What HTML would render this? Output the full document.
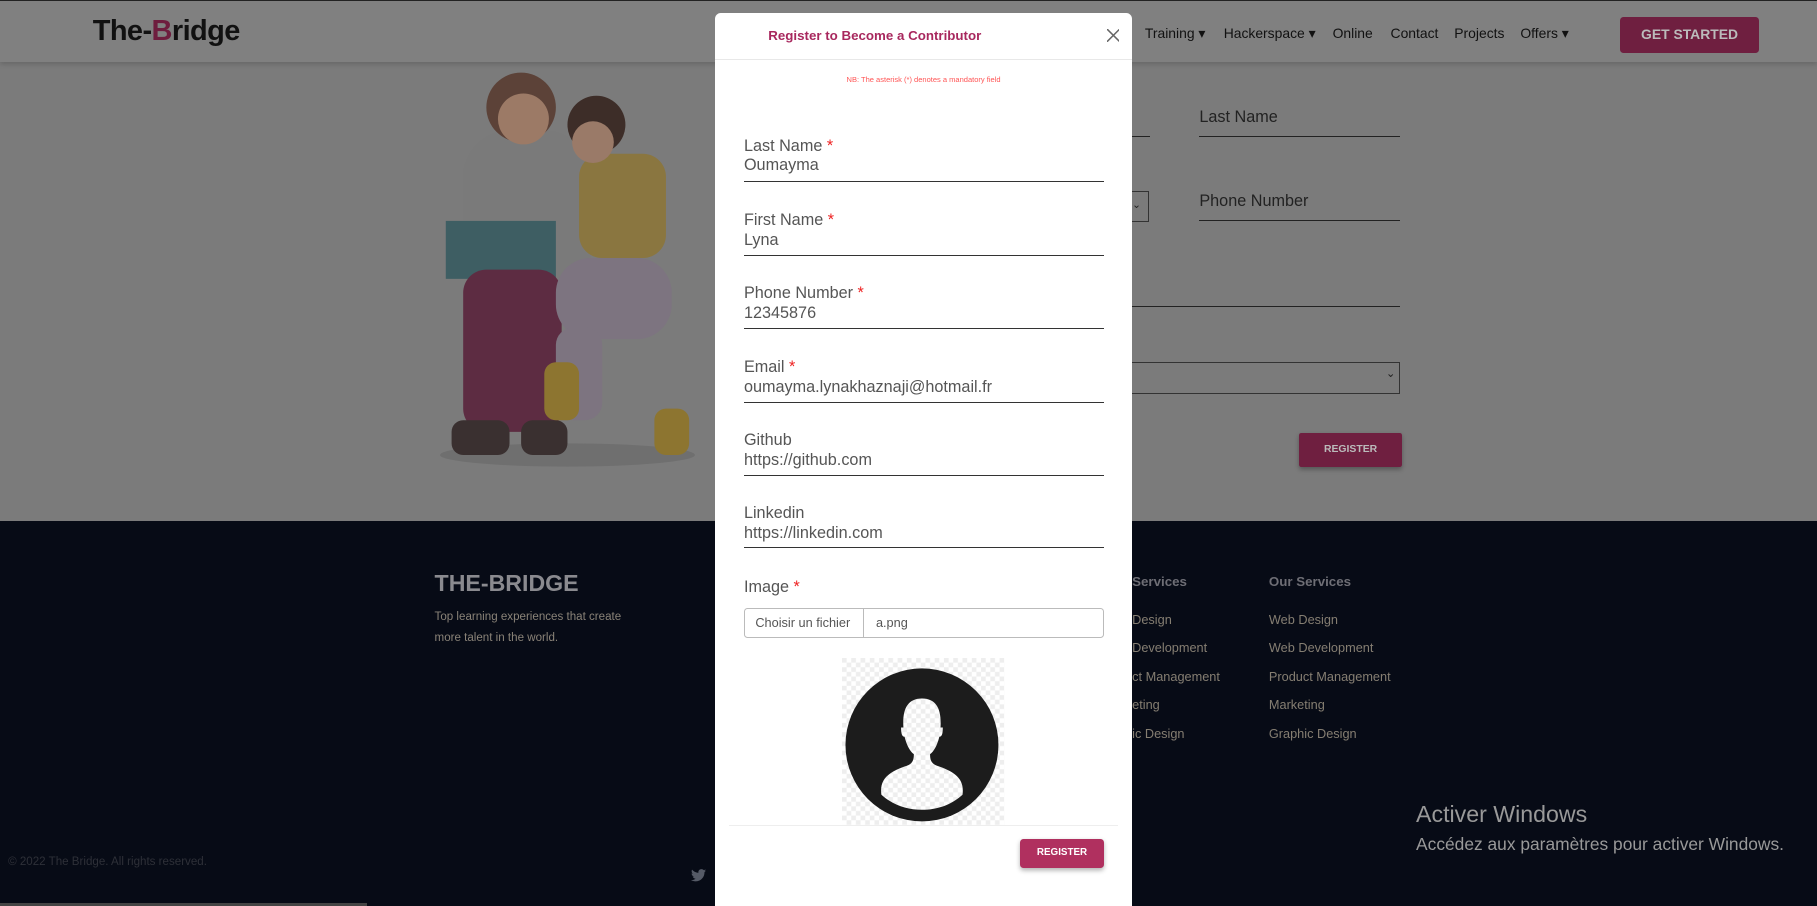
<!DOCTYPE html>
<html><head><meta charset="utf-8"><style>
html,body{margin:0;padding:0;width:1817px;height:906px;overflow:hidden;background:#7b7b7b}
#w{zoom:1.15880;position:relative;width:1568px;height:782px;overflow:hidden;font-family:"Liberation Sans",sans-serif}
.a{position:absolute;white-space:nowrap}
</style></head><body><div id="w">
<!-- nav -->
<div class="a" style="left:0;top:0;width:1568px;height:53px;background:#808080;border-top:1px solid #222;box-shadow:0 2px 4px rgba(0,0,0,.15)"></div>
<div class="a" style="left:80px;top:13px;font-size:25px;font-weight:bold;color:#111;letter-spacing:-0.5px">The-<span style="color:#6e1d3e">B</span>ridge</div>
<div class="a" style="left:988px;top:22px;font-size:12px;color:#111">Training ▾</div>
<div class="a" style="left:1056px;top:22px;font-size:12px;color:#111">Hackerspace ▾</div>
<div class="a" style="left:1150px;top:22px;font-size:12px;color:#111">Online</div>
<div class="a" style="left:1200px;top:22px;font-size:12px;color:#111">Contact</div>
<div class="a" style="left:1255px;top:22px;font-size:12px;color:#111">Projects</div>
<div class="a" style="left:1312px;top:22px;font-size:12px;color:#111">Offers ▾</div>
<div class="a" style="left:1398px;top:15px;width:120px;height:31px;background:#6f1f40;border-radius:3px;color:#bbb;font-size:12px;font-weight:bold;text-align:center;line-height:31px">GET STARTED</div>
<!-- illustration -->
<svg class="a" style="left:380px;top:53px" width="240" height="350">
<ellipse cx="110" cy="340" rx="110" ry="10" fill="#6f6f6f"/>
<rect x="20" y="60" width="110" height="150" rx="40" fill="#7a7a7a"/>
<circle cx="70" cy="40" r="30" fill="#5c4238"/><circle cx="72" cy="50" r="22" fill="#9c7a66"/>
<rect x="120" y="80" width="75" height="90" rx="20" fill="#8a7640"/>
<circle cx="135" cy="55" r="25" fill="#3d2d28"/><circle cx="132" cy="70" r="18" fill="#9a7a68"/>
<rect x="5" y="138" width="95" height="50" fill="#3e5e63"/>
<rect x="20" y="180" width="85" height="140" rx="20" fill="#5d2c42"/>
<rect x="100" y="170" width="100" height="70" rx="30" fill="#7d7480"/>
<rect x="100" y="230" width="40" height="80" rx="15" fill="#7d7480"/>
<rect x="10" y="310" width="50" height="30" rx="10" fill="#3a3030"/><rect x="70" y="310" width="40" height="30" rx="10" fill="#3a3030"/>
<rect x="90" y="260" width="30" height="50" rx="10" fill="#8d7530"/><rect x="185" y="300" width="30" height="40" rx="10" fill="#8d7530"/>
</svg>
<!-- bg form -->
<div class="a" style="left:977px;top:117px;width:15px;height:1px;background:#222"></div>
<div class="a" style="left:1035px;top:93px;font-size:14px;color:#222">Last Name</div>
<div class="a" style="left:1035px;top:117px;width:173px;height:1px;background:#222"></div>
<div class="a" style="left:977px;top:165px;width:14px;height:25px;border:1px solid #333;border-left:none;font-size:9px;color:#222;line-height:25px">⌄</div>
<div class="a" style="left:1035px;top:166px;font-size:14px;color:#222">Phone Number</div>
<div class="a" style="left:1035px;top:190px;width:173px;height:1px;background:#222"></div>
<div class="a" style="left:977px;top:264px;width:231px;height:1px;background:#222"></div>
<div class="a" style="left:977px;top:312px;width:230px;height:26px;border:1px solid #333;border-left:none"></div>
<div class="a" style="left:1196px;top:316px;font-size:10px;color:#222">⌄</div>
<div class="a" style="left:1121px;top:374px;width:89px;height:29px;background:#6f1f40;border-radius:2px;color:#bbb;font-size:9px;font-weight:bold;text-align:center;line-height:29px;box-shadow:0 2px 4px rgba(0,0,0,.3)">REGISTER</div>
<!-- footer -->
<div class="a" style="left:0;top:450px;width:1568px;height:332px;background:#070b16"></div>
<div class="a" style="left:375px;top:492px;font-size:20px;font-weight:bold;color:#8a8a8f">THE-BRIDGE</div>
<div class="a" style="left:375px;top:524px;font-size:10px;line-height:18px;color:#8a8378">Top learning experiences that create<br>more talent in the world.</div>
<div class="a" style="left:977px;top:495px;font-size:11.5px;font-weight:bold;color:#6e6e75">Services</div>
<div class="a" style="left:1095px;top:495px;font-size:11.5px;font-weight:bold;color:#6e6e75">Our Services</div>
<div class="a" style="left:977px;top:523px;font-size:11px;line-height:24.5px;color:#857e72">Design<br>Development<br>ct Management<br>eting<br>ic Design</div>
<div class="a" style="left:1095px;top:523px;font-size:11px;line-height:24.5px;color:#857e72">Web Design<br>Web Development<br>Product Management<br>Marketing<br>Graphic Design</div>
<div class="a" style="left:7px;top:739px;font-size:10px;color:#2e3038">© 2022 The Bridge. All rights reserved.</div>
<svg class="a" style="left:596px;top:750px" width="13" height="11" viewBox="0 0 24 20"><path d="M24 2.4c-.9.4-1.8.7-2.8.8 1-.6 1.8-1.6 2.2-2.7-1 .6-2 1-3.1 1.2C19.4.7 18.1 0 16.6 0c-2.7 0-4.9 2.2-4.9 4.9 0 .4 0 .8.1 1.1C7.7 5.8 4.1 3.9 1.7.9c-.4.7-.7 1.6-.7 2.5 0 1.7.9 3.2 2.2 4.1-.8 0-1.6-.2-2.2-.6v.1c0 2.4 1.7 4.4 3.9 4.8-.4.1-.8.2-1.3.2-.3 0-.6 0-.9-.1.6 2 2.4 3.4 4.6 3.4-1.7 1.3-3.8 2.1-6.1 2.1-.4 0-.8 0-1.2-.1 2.2 1.4 4.8 2.2 7.5 2.2 9.1 0 14-7.5 14-14v-.6c1-.7 1.8-1.6 2.5-2.5z" fill="#555a66"/></svg>
<div class="a" style="left:0;top:779px;width:317px;height:3px;background:#444"></div>
<div class="a" style="left:1222px;top:691px;font-size:20px;color:#999">Activer Windows</div>
<div class="a" style="left:1222px;top:720px;font-size:15px;color:#999">Accédez aux paramètres pour activer Windows.</div>
<!-- modal -->
<div class="a" style="left:617px;top:11px;width:360px;height:780px;background:#fff;border-radius:5px">
<div class="a" style="left:0;top:0;width:360px;height:40px;border-bottom:1px solid #e8e8e8"></div>
<div class="a" style="left:46px;top:13px;font-size:11.5px;font-weight:bold;color:#a8285e">Register to Become a Contributor</div>
<svg class="a" style="left:338px;top:14px" width="11" height="11"><path d="M0 0L11 11M11 0L0 11" stroke="#666" stroke-width="1.3"/></svg>
<div class="a" style="left:0;top:54px;width:360px;text-align:center;font-size:6.5px;color:#f55">NB: The asterisk (*) denotes a mandatory field</div>
</div>
<div class="a" style="left:642px;top:118px;font-size:14px;color:#555;line-height:17px">Last Name <span style="color:#e22">*</span><br>Oumayma</div><div class="a" style="left:642px;top:156px;width:311px;height:1px;background:#333"></div>
<div class="a" style="left:642px;top:182px;font-size:14px;color:#555;line-height:17px">First Name <span style="color:#e22">*</span><br>Lyna</div><div class="a" style="left:642px;top:220px;width:311px;height:1px;background:#333"></div>
<div class="a" style="left:642px;top:245px;font-size:14px;color:#555;line-height:17px">Phone Number <span style="color:#e22">*</span><br>12345876</div><div class="a" style="left:642px;top:283px;width:311px;height:1px;background:#333"></div>
<div class="a" style="left:642px;top:309px;font-size:14px;color:#555;line-height:17px">Email <span style="color:#e22">*</span><br>oumayma.lynakhaznaji@hotmail.fr</div><div class="a" style="left:642px;top:347px;width:311px;height:1px;background:#333"></div>
<div class="a" style="left:642px;top:372px;font-size:14px;color:#555;line-height:17px">Github<br>https://github.com</div><div class="a" style="left:642px;top:410px;width:311px;height:1px;background:#333"></div>
<div class="a" style="left:642px;top:435px;font-size:14px;color:#555;line-height:17px">Linkedin<br>https://linkedin.com</div><div class="a" style="left:642px;top:472px;width:311px;height:1px;background:#333"></div>
<div class="a" style="left:642px;top:499px;font-size:14px;color:#555">Image <span style="color:#e22">*</span></div>
<div class="a" style="left:642px;top:525px;width:309px;height:24px;border:1px solid #bbb;border-radius:3px;font-size:11px;color:#555;line-height:24px"><span style="display:inline-block;width:103px;border-right:1px solid #bbb;padding-left:9px;box-sizing:border-box">Choisir un fichier</span> <span style="padding-left:7px">a.png</span></div>
<svg class="a" style="left:727px;top:568px" width="140" height="144">
<defs><pattern id="c" width="8" height="8" patternUnits="userSpaceOnUse"><rect width="8" height="8" fill="#fff"/><rect width="4" height="4" fill="#eee"/><rect x="4" y="4" width="4" height="4" fill="#eee"/></pattern></defs>
<rect width="140" height="144" fill="url(#c)"/>
<circle cx="69" cy="75" r="66" fill="#1c1c1c"/>
<path d="M69 35c-13 0-17 10-16 25l-2 0c0 6 1 8 3 8 2 8 5 13 8 15 0 5-1 8-6 10-15 5-24 11-22 25 10 9 22 13 35 13s25-4 35-13c2-14-7-20-22-25-5-2-6-5-6-10 3-2 6-7 8-15 2 0 3-2 3-8l-2 0c1-15-3-25-16-25z" fill="url(#c)"/>
</svg>
<div class="a" style="left:629px;top:712px;width:336px;height:1px;background:#eee"></div>
<div class="a" style="left:880px;top:724px;width:73px;height:25px;background:#b0305f;border-radius:3px;color:#fff;font-size:8.5px;font-weight:bold;text-align:center;line-height:25px;box-shadow:0 2px 4px rgba(0,0,0,.3)">REGISTER</div>
</div></body></html>
